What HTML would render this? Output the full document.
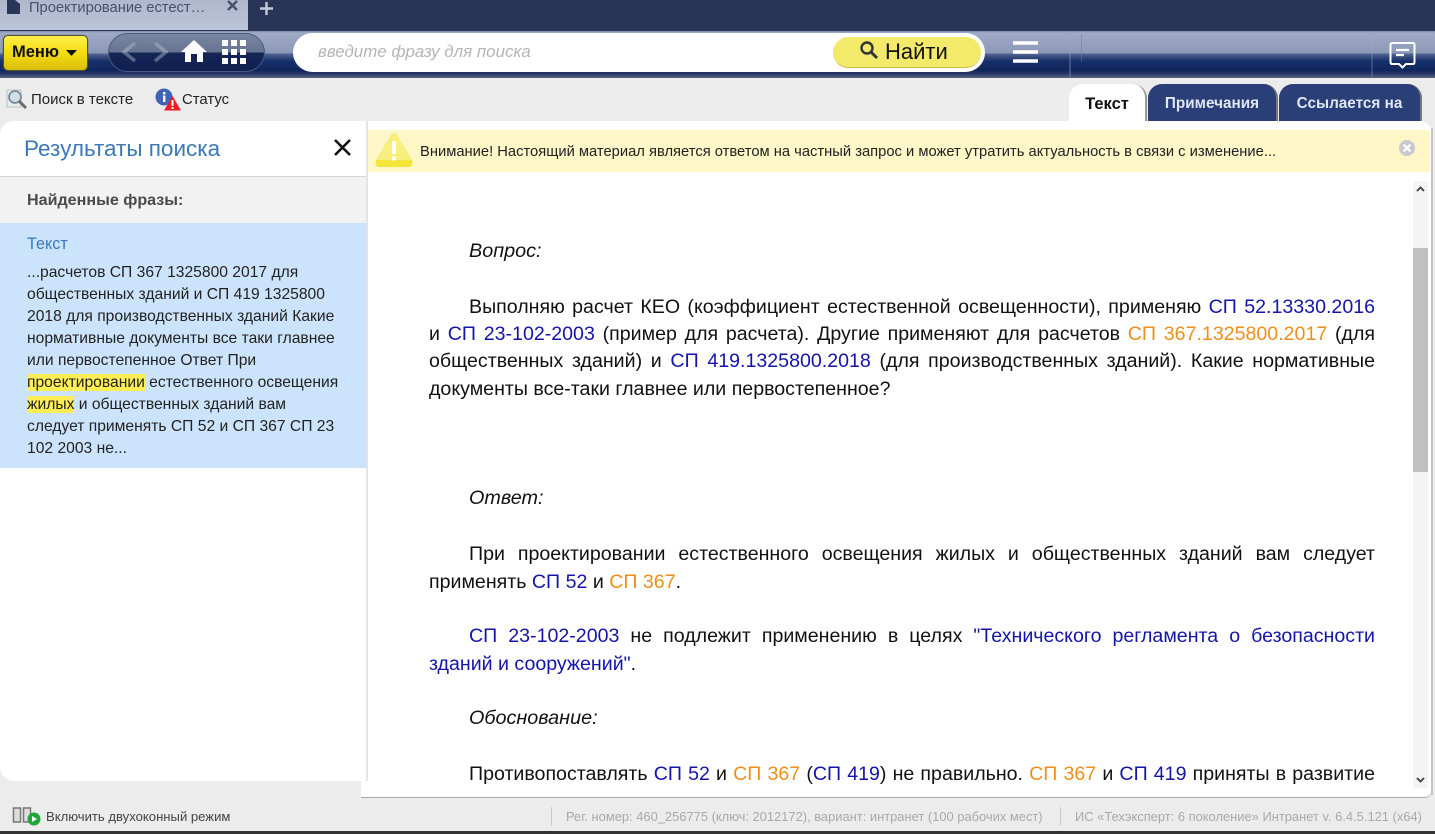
<!DOCTYPE html>
<html lang="ru"><head><meta charset="utf-8"><title>Проектирование</title>
<style>
*{box-sizing:border-box}
html,body{margin:0;padding:0;width:1435px;height:834px;overflow:hidden;background:#ececec;font-family:"Liberation Sans","Noto Sans CJK SC",sans-serif}
.a{position:absolute;white-space:nowrap}
.l{position:absolute;white-space:nowrap;font-size:19.6px;line-height:24px;color:#111;height:24px}
.i{font-style:italic;font-size:19.8px}
.j{text-align:justify;text-align-last:justify;white-space:normal}
.b{color:#1414aa}.o{color:#ee8f1a}
.s{position:absolute;left:27px;width:335px;font-size:15.65px;line-height:22px;height:22px;color:#222;white-space:nowrap}
.t{position:absolute;top:84px;height:37px;border-radius:14px 14px 0 0;border-right:2px solid #777;font-size:15.3px;font-weight:bold;line-height:40px;text-align:center;color:#dfe6f4;background:#2a3f77}
mark{background:#ffee55;color:#222}
</style></head><body>
<div class="a" style="left:0;top:0;width:1435px;height:31px;background:#283557"></div>
<div class="a" style="left:0;top:0;width:248px;height:30px;background:linear-gradient(#aeb7cc,#bcc4d8)"></div>
<svg class="a" style="left:6px;top:0" width="15" height="14" viewBox="0 0 15 14"><path d="M1 0H9L14 4V14H1Z" fill="#2a3658"/></svg>
<div class="a" style="left:29px;top:-1px;font-size:14.7px;line-height:18px;color:#47506a">Проектирование естест…</div>
<svg class="a" style="left:226px;top:0" width="13" height="12" viewBox="0 0 13 12"><path d="M2 1L11 10M11 1L2 10" stroke="#47506a" stroke-width="2.4"/></svg>
<svg class="a" style="left:259px;top:1px" width="15" height="15" viewBox="0 0 15 15"><path d="M7.5 1V14M1 7.5H14" stroke="#c4cbdc" stroke-width="2.4"/></svg>

<div class="a" style="left:0;top:31px;width:1435px;height:47px;background:linear-gradient(#7d89a5 0,#a0abc6 4%,#8c99b8 46%,#4b5d8b 50%,#17306a 64%,#10265d 84%,#2c3c66 92%,#5a6680 100%)"></div>
<div class="a" style="left:3px;top:35px;width:85px;height:36px;border-radius:5px;border:1px solid #4f4f35;box-shadow:0 0 1px #4f4f35;background:linear-gradient(#fff04a,#f5dc12 50%,#d8bd08);font-size:16.5px;font-weight:bold;line-height:32px;padding-left:8px;color:#111">Меню</div>
<svg class="a" style="left:65px;top:49px" width="13" height="8"><path d="M1 1H12L6.5 7Z" fill="#111"/></svg>
<div class="a" style="left:108px;top:33px;width:157px;height:39px;border-radius:20px;border:1px solid #4a5a80;background:linear-gradient(#7a86a2 0,#667592 48%,#142556 52%,#0f1f50 100%)"></div>
<svg class="a" style="left:120px;top:41px" width="50" height="22" viewBox="0 0 50 22"><defs><linearGradient id="c" x1="0" y1="0" x2="0" y2="22" gradientUnits="userSpaceOnUse"><stop offset="0" stop-color="#8d97ae"/><stop offset=".5" stop-color="#8d97ae"/><stop offset=".55" stop-color="#5c6a8e"/><stop offset="1" stop-color="#56648a"/></linearGradient></defs><path d="M15 2L4 11L15 20" fill="none" stroke="url(#c)" stroke-width="3.6"/><path d="M35 2L46 11L35 20" fill="none" stroke="url(#c)" stroke-width="3.6"/></svg>
<svg class="a" style="left:181px;top:39px" width="26" height="24" viewBox="0 0 26 24"><path d="M13 1L0 13H4V23H10V15H16V23H22V13H26Z" fill="#fff"/></svg>
<svg class="a" style="left:222px;top:40px" width="24" height="24" viewBox="0 0 24 24" fill="#fff"><rect width="6" height="6"/><rect x="9" width="6" height="6"/><rect x="18" width="6" height="6"/><rect y="9" width="6" height="6"/><rect x="9" y="9" width="6" height="6"/><rect x="18" y="9" width="6" height="6"/><rect y="18" width="6" height="6"/><rect x="9" y="18" width="6" height="6"/><rect x="18" y="18" width="6" height="6"/></svg>
<div class="a" style="left:293px;top:33px;width:692px;height:39px;border-radius:20px;background:#fff"></div>
<div class="a" style="left:318px;top:43px;font-size:16.9px;line-height:18px;font-style:italic;color:#b5b5b5">введите фразу для поиска</div>
<div class="a" style="left:833px;top:37px;width:148px;height:31px;border-radius:16px;background:#f3e96a;border-bottom:1px solid #c8bd40"></div>
<svg class="a" style="left:859px;top:40px" width="21" height="20" viewBox="0 0 21 20"><circle cx="8" cy="8" r="5.5" fill="none" stroke="#333" stroke-width="2.4"/><path d="M12 12L18 18" stroke="#333" stroke-width="3"/></svg>
<div class="a" style="left:885px;top:39px;font-size:22px;line-height:26px;color:#111">Найти</div>
<svg class="a" style="left:1013px;top:41px" width="26" height="22"><path d="M0 2H25M0 11H25M0 20H25" stroke="#fff" stroke-width="3.4"/></svg>
<div class="a" style="left:1069px;top:32px;width:2px;height:45px;background:rgba(160,170,195,.3)"></div>
<div class="a" style="left:1081px;top:34px;width:1px;height:28px;background:rgba(110,125,160,.5)"></div>
<div class="a" style="left:1371px;top:32px;width:2px;height:45px;background:rgba(160,170,195,.25)"></div>
<svg class="a" style="left:1389px;top:41px" width="27" height="28" viewBox="0 0 27 28"><path d="M3 2H24Q25.500 2 25.500 4V21Q25.500 23 24 23H17L13.500 26.500L10 23H3Q1.500 23 1.500 21V4Q1.500 2 3 2Z" fill="none" stroke="#fff" stroke-width="2"/><path d="M7 9H20M7 14H15" stroke="#fff" stroke-width="2.200"/></svg>

<svg class="a" style="left:6px;top:89px" width="22" height="21" viewBox="0 0 22 21"><rect x="1" y="1" width="14" height="17" fill="#e8eef0" stroke="#b5c5c5"/><circle cx="9" cy="8" r="6" fill="#cfe0ea" stroke="#7d8a96" stroke-width="1.800"/><path d="M13 12L20 19" stroke="#6b6b6b" stroke-width="3"/></svg>
<div class="a" style="left:31px;top:91px;font-size:15px;line-height:18px;color:#222">Поиск в тексте</div>
<svg class="a" style="left:155px;top:88px" width="26" height="23" viewBox="0 0 26 23"><circle cx="9" cy="9" r="8.500" fill="#3f63b5"/><rect x="8" y="7.500" width="2.400" height="6.500" fill="#fff"/><rect x="8" y="4" width="2.400" height="2.400" fill="#fff"/><path d="M17.500 8L26 22.500H9Z" fill="#ef1c24"/><rect x="16.500" y="12" width="2" height="6" fill="#fff"/><rect x="16.500" y="19" width="2" height="2" fill="#fff"/></svg>
<div class="a" style="left:182px;top:91px;font-size:14.9px;line-height:18px;color:#222">Статус</div>

<div class="t" style="left:1069px;width:78px;background:#fff;border-right-color:#999;color:#111;font-size:16.5px">Текст</div>
<div class="t" style="left:1148px;width:130px">Примечания</div>
<div class="t" style="left:1279px;width:143px">Ссылается на</div>

<!-- left panel -->
<div class="a" style="left:0;top:121px;width:367px;height:660px;background:#fff;border-radius:14px 0 0 14px"></div>
<div class="a" style="left:24px;top:135px;font-size:22.500px;line-height:28px;color:#3a78b8">Результаты поиска</div>
<svg class="a" style="left:333px;top:138px" width="19" height="19"><path d="M2 2L17 17M17 2L2 17" stroke="#111" stroke-width="2.600"/></svg>
<div class="a" style="left:0;top:176px;width:366px;height:47px;background:#f2f2f2;border-top:1px solid #d6d6d6"></div>
<div class="a" style="left:27px;top:190px;font-size:16.100px;line-height:20px;font-weight:bold;color:#4a4a4a">Найденные фразы:</div>
<div class="a" style="left:0;top:223px;width:366px;height:245px;background:#cce4fb"></div>
<div class="a" style="left:27px;top:234px;font-size:16.200px;line-height:20px;color:#3a78b8">Текст</div>
<div class="s" style="top:262px">...расчетов СП 367 1325800 2017 для</div>
<div class="s" style="top:284px">общественных зданий и СП 419 1325800</div>
<div class="s" style="top:306px">2018 для производственных зданий Какие</div>
<div class="s" style="top:328px">нормативные документы все таки главнее</div>
<div class="s" style="top:350px">или первостепенное Ответ При</div>
<div class="s" style="top:372px"><mark>проектировании</mark> естественного освещения</div>
<div class="s" style="top:394px"><mark>жилых</mark> и общественных зданий вам</div>
<div class="s" style="top:416px">следует применять СП 52 и СП 367 СП 23</div>
<div class="s" style="top:438px">102 2003 не...</div>

<!-- right -->
<div class="a" style="left:366px;top:121px;width:1066px;height:660px;background:#fff;border-left:2px solid #e4e4e4;border-radius:0 12px 0 0"></div>
<div class="a" style="left:361px;top:781px;width:1071px;height:17px;background:#fff;border-bottom:1px solid #a8a8a8;border-radius:0 0 8px 0"></div>
<div class="a" style="left:1431px;top:128px;width:2px;height:667px;background:#c4c4c4"></div>
<div class="a" style="left:368px;top:130px;width:1062px;height:42px;background:#fff7c8"></div>
<svg class="a" style="left:374px;top:132px" width="40" height="36" viewBox="0 0 40 36"><path d="M17 3Q20 -1 23 3L38 28Q40 35 34 35H6Q0 35 2 28Z" fill="#f3e53a"/><path d="M17 3Q20 -1 23 3L38 28L2 28Z" fill="#f7ee7c"/><rect x="18" y="9" width="4" height="13" fill="#fff"/><rect x="18" y="24.500" width="4" height="4" fill="#fff"/></svg>
<div class="a" style="left:420px;top:143px;font-size:14.740px;line-height:18px;color:#222">Внимание! Настоящий материал является ответом на частный запрос и может утратить актуальность в связи с изменение...</div>
<svg class="a" style="left:1399px;top:140px" width="16" height="16" viewBox="0 0 16 16"><circle cx="8" cy="8" r="8" fill="#c9c9cf"/><path d="M4.500 4.500L11.500 11.500M11.500 4.500L4.500 11.500" stroke="#fff" stroke-width="2.200"/></svg>

<div class="a" style="left:1413px;top:181px;width:15px;height:607px;background:#f4f4f4"></div>
<div class="a" style="left:1413px;top:248px;width:15px;height:224px;background:#c0c0c0"></div>
<svg class="a" style="left:1416px;top:186px" width="9" height="7"><path d="M1 5L4.500 1.500L8 5" fill="none" stroke="#444" stroke-width="1.900"/></svg>
<svg class="a" style="left:1416px;top:776px" width="9" height="7"><path d="M1 2L4.500 5.500L8 2" fill="none" stroke="#444" stroke-width="1.900"/></svg>

<div class="l i" style="left:469px;top:239px">Вопрос:</div>
<div class="l j" style="left:469px;top:295px;width:906px">Выполняю расчет КЕО (коэффициент естественной освещенности), применяю <span class="b">СП 52.13330.2016</span></div>
<div class="l j" style="left:429px;top:322px;width:946px">и <span class="b">СП 23-102-2003</span> (пример для расчета). Другие применяют для расчетов <span class="o">СП 367.1325800.2017</span> (для</div>
<div class="l j" style="left:429px;top:349px;width:946px">общественных зданий) и <span class="b">СП 419.1325800.2018</span> (для производственных зданий). Какие нормативные</div>
<div class="l" style="left:429px;top:377px">документы все-таки главнее или первостепенное?</div>
<div class="l i" style="left:469px;top:486px">Ответ:</div>
<div class="l j" style="left:469px;top:542px;width:906px">При проектировании естественного освещения жилых и общественных зданий вам следует</div>
<div class="l" style="left:429px;top:570px">применять <span class="b">СП 52</span> и <span class="o">СП 367</span>.</div>
<div class="l j" style="left:469px;top:624px;width:906px"><span class="b">СП 23-102-2003</span> не подлежит применению в целях <span class="b">"Технического регламента о безопасности</span></div>
<div class="l" style="left:429px;top:652px"><span class="b">зданий и сооружений"</span>.</div>
<div class="l i" style="left:469px;top:706px">Обоснование:</div>
<div class="l j" style="left:469px;top:762px;width:906px">Противопоставлять <span class="b">СП 52</span> и <span class="o">СП 367</span> (<span class="b">СП 419</span>) не правильно. <span class="o">СП 367</span> и <span class="b">СП 419</span> приняты в развитие</div>

<!-- footer -->
<svg class="a" style="left:12px;top:806px" width="30" height="20" viewBox="0 0 30 20"><rect x="1.500" y="2" width="7" height="14" fill="#ddd" stroke="#777" stroke-width="1.500"/><rect x="11.500" y="2" width="7" height="14" fill="#ddd" stroke="#777" stroke-width="1.500"/><circle cx="22" cy="13" r="6.500" fill="#1ea83a"/><path d="M20 10L25 13L20 16Z" fill="#fff"/></svg>
<div class="a" style="left:46px;top:808px;font-size:13.100px;line-height:17px;color:#444">Включить двухоконный режим</div>
<div class="a" style="left:551px;top:807px;width:1px;height:19px;background:#ccc"></div>
<div class="a" style="left:566px;top:808px;font-size:12.920px;line-height:17px;color:#a9a9a9">Рег. номер: 460_256775 (ключ: 2012172), вариант: интранет (100 рабочих мест)</div>
<div class="a" style="left:1060px;top:807px;width:1px;height:19px;background:#ccc"></div>
<div class="a" style="left:1075px;top:808px;font-size:12.920px;line-height:17px;color:#a9a9a9">ИС «Техэксперт: 6 поколение» Интранет v. 6.4.5.121 (x64)</div>
<div class="a" style="left:0;top:831px;width:1435px;height:3px;background:#333"></div>
</body></html>
